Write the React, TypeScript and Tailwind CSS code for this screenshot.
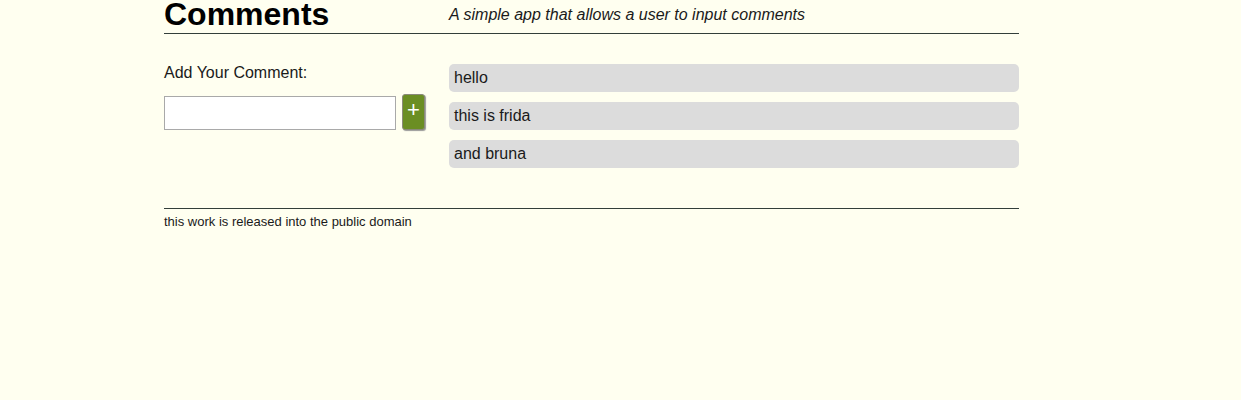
import { useState } from 'react';

export default function App() {
  const [comments, setComments] = useState<string[]>(['hello', 'this is frida', 'and bruna']);
  const [text, setText] = useState('');

  const add = () => {
    if (!text.trim()) return;
    setComments([...comments, text.trim()]);
    setText('');
  };

  return (
    <div className="min-h-[400px] bg-[#fffff0] font-['Liberation_Sans',Arial,sans-serif] text-[#1a1a1a]">
      <div className="ml-[164px] w-[855px]">
        {/* header */}
        <div className="flex items-end border-b border-[#333f3a] h-[34px]">
          <h1 className="w-[285px] text-[32px] font-bold leading-none text-black pb-[3px]">Comments</h1>
          <p className="text-[16px] italic pb-[6px]">A simple app that allows a user to input comments</p>
        </div>

        <div className="flex pt-[30px] pb-[40px] border-b border-[#333f3a]">
          <div className="w-[285px]">
            <div className="text-[16px] leading-[18px]">Add Your Comment:</div>
            <div className="flex items-end gap-[6px] mt-[12px]">
              <input
                value={text}
                onChange={(e) => setText(e.target.value)}
                className="w-[232px] h-[34px] bg-white border border-[#a9a9a9] px-1 outline-none"
              />
              <button
                onClick={add}
                className="w-[23px] h-[36px] rounded-[3px] bg-[#6b8e23] text-white text-[22px] leading-none pb-[4px] border border-[#8a8a7a] shadow-[1px_1px_1px_#999]"
              >
                +
              </button>
            </div>
          </div>
          <div className="w-[570px] flex flex-col gap-[10px]">
            {comments.map((c, i) => (
              <div key={i} className="h-[28px] bg-[#dcdcdc] rounded-[5px] px-[5px] text-[16px] leading-[28px]">
                {c}
              </div>
            ))}
          </div>
        </div>

        <p className="text-[13px] mt-[3px]">this work is released into the public domain</p>
      </div>
    </div>
  );
}
